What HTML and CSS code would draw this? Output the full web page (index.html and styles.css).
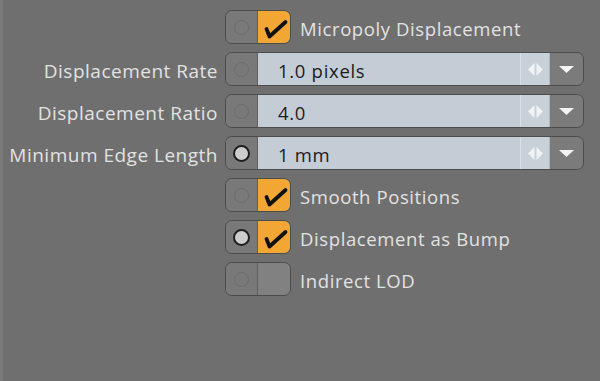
FILE: index.html
```html
<!DOCTYPE html>
<html>
<head>
<meta charset="utf-8">
<link rel="stylesheet" href="styles.css">
</head>
<body>
<div class="panel">
  <div class="label"></div>
  <div class="ctl">
    <div class="toggle">
      <span class="dotcell"><span class="dot"></span></span>
      <span class="chk on"><svg width="33" height="32" viewBox="0 0 33 32"><path d="M8.5 18 L11.5 25.5 L27.5 11" fill="none" stroke="#111" stroke-width="3.8" stroke-linecap="round" stroke-linejoin="round"/></svg></span>
    </div>
    <span class="clabel">Micropoly Displacement</span>
  </div>

  <div class="label">Displacement Rate</div>
  <div class="field">
    <span class="dotcell"><span class="dot"></span></span>
    <span class="value">1.0 pixels</span>
    <span class="slider"><svg class="arrows" width="15" height="13" viewBox="0 0 15 13"><path d="M6.5 0 L0 6.5 L6.5 13 Z M8.5 0 L15 6.5 L8.5 13 Z" fill="#f0f3f6"/></svg></span>
    <span class="drop"><svg width="15" height="7" viewBox="0 0 15 7"><path d="M0 0 L15 0 L7.5 7 Z" fill="#f4f4f4"/></svg></span>
  </div>

  <div class="label">Displacement Ratio</div>
  <div class="field">
    <span class="dotcell"><span class="dot"></span></span>
    <span class="value">4.0</span>
    <span class="slider"><svg class="arrows" width="15" height="13" viewBox="0 0 15 13"><path d="M6.5 0 L0 6.5 L6.5 13 Z M8.5 0 L15 6.5 L8.5 13 Z" fill="#f0f3f6"/></svg></span>
    <span class="drop"><svg width="15" height="7" viewBox="0 0 15 7"><path d="M0 0 L15 0 L7.5 7 Z" fill="#f4f4f4"/></svg></span>
  </div>

  <div class="label">Minimum Edge Length</div>
  <div class="field">
    <span class="dotcell"><span class="dot active"></span></span>
    <span class="value">1 mm</span>
    <span class="slider"><svg class="arrows" width="15" height="13" viewBox="0 0 15 13"><path d="M6.5 0 L0 6.5 L6.5 13 Z M8.5 0 L15 6.5 L8.5 13 Z" fill="#f0f3f6"/></svg></span>
    <span class="drop"><svg width="15" height="7" viewBox="0 0 15 7"><path d="M0 0 L15 0 L7.5 7 Z" fill="#f4f4f4"/></svg></span>
  </div>

  <div class="label"></div>
  <div class="ctl">
    <div class="toggle">
      <span class="dotcell"><span class="dot"></span></span>
      <span class="chk on"><svg width="33" height="32" viewBox="0 0 33 32"><path d="M8.5 18 L11.5 25.5 L27.5 11" fill="none" stroke="#111" stroke-width="3.8" stroke-linecap="round" stroke-linejoin="round"/></svg></span>
    </div>
    <span class="clabel">Smooth Positions</span>
  </div>

  <div class="label"></div>
  <div class="ctl">
    <div class="toggle">
      <span class="dotcell"><span class="dot active"></span></span>
      <span class="chk on"><svg width="33" height="32" viewBox="0 0 33 32"><path d="M8.5 18 L11.5 25.5 L27.5 11" fill="none" stroke="#111" stroke-width="3.8" stroke-linecap="round" stroke-linejoin="round"/></svg></span>
    </div>
    <span class="clabel">Displacement as Bump</span>
  </div>

  <div class="label"></div>
  <div class="ctl">
    <div class="toggle">
      <span class="dotcell"><span class="dot"></span></span>
      <span class="chk"></span>
    </div>
    <span class="clabel">Indirect LOD</span>
  </div>
</div>
</body>
</html>
```

FILE: styles.css
```css
html, body {
  margin: 0;
  padding: 0;
  width: 600px;
  height: 381px;
  background: #6f6f6f;
  overflow: hidden;
}
body {
  border-left: 3px solid #7a7a7a;
  box-sizing: border-box;
  font-family: "Open Sans", "Liberation Sans", sans-serif;
  font-size: 18.5px;
  letter-spacing: 0.7px;
}
.panel {
  display: grid;
  grid-template-columns: 215px 1fr;
  grid-auto-rows: 34px;
  column-gap: 7px;
  row-gap: 8px;
  padding: 10px 16px 0 0;
}
.label {
  color: #e2e2e2;
  text-align: right;
  line-height: 34px;
  white-space: nowrap;
  padding-top: 2px;
  font-size: 19px;
  letter-spacing: 0.5px;
}
.ctl {
  display: flex;
  align-items: center;
  gap: 9px;
}
.toggle {
  display: flex;
  width: 66px;
  height: 34px;
  box-sizing: border-box;
  border: 1.5px solid #4c4c4c;
  border-radius: 7px;
  overflow: hidden;
}
.dotcell {
  width: 31px;
  flex: none;
  background: #797979;
  display: flex;
  align-items: center;
  justify-content: center;
  border-right: 1px solid #5e5e5e;
}
.dot {
  width: 15px;
  height: 15px;
  border-radius: 50%;
  border: 1.5px solid #6c6c6c;
  box-sizing: border-box;
}
.dot.active {
  width: 17px;
  height: 17px;
  border: 2.5px solid #1f1f1f;
  background: #cdcdcd;
}
.chk {
  flex: 1;
  background: #818181;
  display: flex;
  align-items: center;
  justify-content: center;
}
.chk.on {
  background: #f2a735;
}
.clabel {
  color: #e2e2e2;
  white-space: nowrap;
  padding-top: 2px;
  letter-spacing: 0.6px;
}
.field {
  display: flex;
  height: 34px;
  box-sizing: border-box;
  border: 1.5px solid #4c4c4c;
  border-radius: 7px;
  overflow: hidden;
}
.value {
  flex: 1;
  background: #c4cdd6;
  color: #1c1c22;
  padding-left: 20px;
  line-height: 32px;
  padding-top: 2px;
  box-sizing: border-box;
}
.slider {
  width: 28px;
  flex: none;
  background: #c8d0d8;
  border-left: 1px solid #d9e0e6;
  border-right: 1px solid #b0b8c0;
  display: flex;
  align-items: center;
  justify-content: center;
}
.arrows {
  flex: none;
  display: block;
  width: 15px;
  height: 13px;
}
.drop {
  width: 33px;
  flex: none;
  background: #7b7b7b;
  display: flex;
  align-items: center;
  justify-content: center;
}
```
